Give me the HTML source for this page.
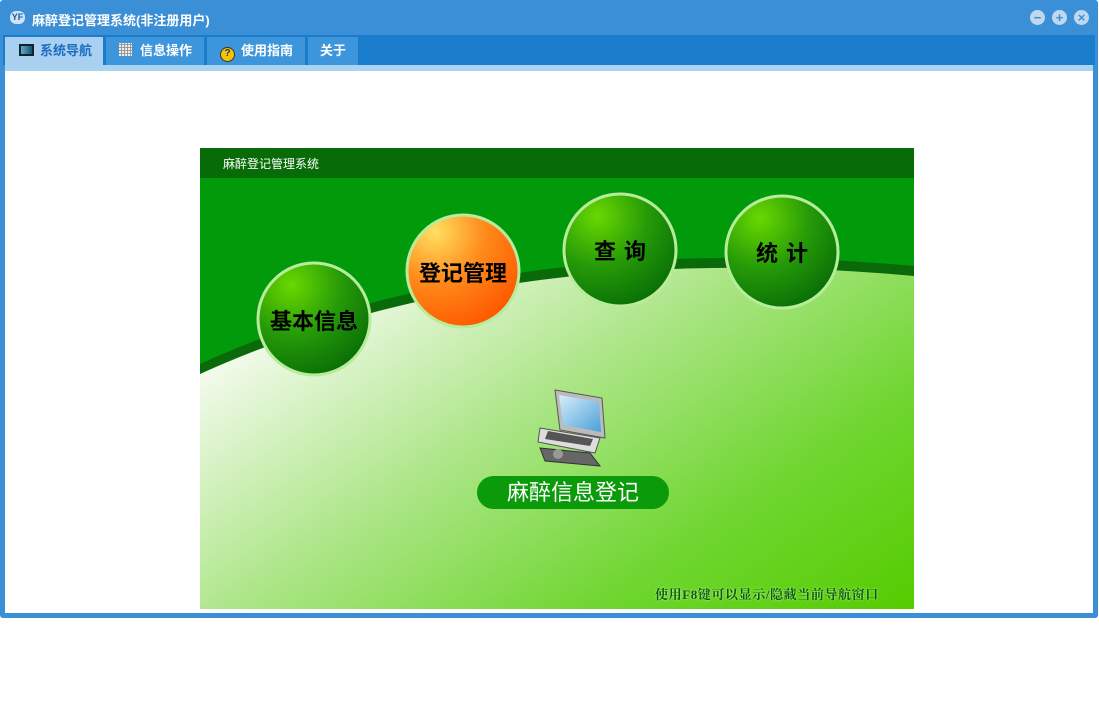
<!DOCTYPE html>
<html><head><meta charset="utf-8"><style>
*{margin:0;padding:0;box-sizing:border-box}
body{width:1099px;height:723px;background:#fff;position:relative;overflow:hidden;font-family:"Liberation Sans","Noto Sans CJK SC",sans-serif}
.win{position:absolute;left:0;top:0;width:1098px;height:618px;background:#3a8fd6;border-radius:3px}
.title{position:absolute;left:32px;top:10px;color:#fff;font-size:13px;font-weight:bold}
.tabbar{position:absolute;left:3px;top:35px;width:1092px;height:30px;background:#1a7dcc}
.tab{position:absolute;top:2px;height:28px;background:#3d95dc;color:#fff;font-size:13px;font-weight:bold;line-height:28px;white-space:nowrap}
.strip{position:absolute;left:5px;top:65px;width:1088px;height:6px;background:#a8d4f2}
.content{position:absolute;left:5px;top:71px;width:1088px;height:542px;background:#fff}
.panel{position:absolute;left:200px;top:148px;width:714px;height:461px;overflow:hidden}
.btn{position:absolute;left:477px;top:476px;width:192px;height:33px;border-radius:17px;background:#0a9a0a;color:#fff;font-size:22px;text-align:center;line-height:33px}
.hint{position:absolute;left:655px;top:584px;font-size:13px;font-weight:bold;color:#0c5a0c;text-shadow:0 0 2px #d0ffb0;letter-spacing:0.6px;font-family:"Liberation Serif","Noto Serif CJK SC",serif}
.ctl{position:absolute;top:10px;width:15px;height:15px;border-radius:50%;background:#c0d8ef;color:#3a8fd6;font-size:13px;font-weight:bold;line-height:15px;text-align:center}
.ct{position:absolute;width:112px;text-align:center;font-size:22px;color:#000;font-weight:bold}
</style></head><body>
<div class="win">
<div style="position:absolute;left:10px;top:11px;width:15px;height:13px;border-radius:6px;background:#cfe3f5;color:#1a5fa5;font-size:9px;font-weight:bold;line-height:13px;text-align:center">YF</div>
<div class="title">麻醉登记管理系统(非注册用户)</div>
<div class="ctl" style="left:1030px">−</div><div class="ctl" style="left:1052px">+</div><div class="ctl" style="left:1074px">×</div>
<div class="tabbar">
<div class="tab" style="left:2px;width:98px;background:#a9d0f0;color:#1a6cc0"><span style="display:inline-block;width:15px;height:12px;border:2px solid #123;background:linear-gradient(90deg,#6ab,#157);margin:0 6px 0 14px;vertical-align:-1px"></span>系统导航</div>
<div class="tab" style="left:103px;width:98px"><span style="display:inline-block;width:13px;height:13px;background:repeating-linear-gradient(90deg,transparent 0 2px,#999 2px 3px),repeating-linear-gradient(0deg,#eee 0 2px,#999 2px 3px);margin:0 8px 0 13px;vertical-align:-1px"></span>信息操作</div>
<div class="tab" style="left:204px;width:98px"><span style="display:inline-block;width:15px;height:15px;border-radius:50%;background:#f5c400;border:1.5px solid #333;color:#236;font-size:10px;line-height:12px;text-align:center;margin:0 6px 0 13px;vertical-align:-1px">?</span>使用指南</div>
<div class="tab" style="left:305px;width:50px;text-align:center">关于</div>
</div>
<div class="strip"></div>
<div class="content"></div>
</div>
<div class="panel">
<svg width="714" height="461" style="position:absolute;left:0;top:0">
<defs>
<linearGradient id="bg" x1="0" y1="0.3" x2="1" y2="1"><stop offset="0" stop-color="#f4fbee"/><stop offset="0.35" stop-color="#aee68a"/><stop offset="0.7" stop-color="#6fd630"/><stop offset="1" stop-color="#55cc00"/></linearGradient>
<radialGradient id="g" cx="0.3" cy="0.2" r="0.9"><stop offset="0" stop-color="#6ad800"/><stop offset="0.5" stop-color="#259a08"/><stop offset="1" stop-color="#066a06"/></radialGradient>
<radialGradient id="o" cx="0.25" cy="0.15" r="0.9"><stop offset="0" stop-color="#ffe060"/><stop offset="0.5" stop-color="#ff8a1a"/><stop offset="1" stop-color="#ff5a00"/></radialGradient>
<linearGradient id="sc" x1="0" y1="0" x2="1" y2="1"><stop offset="0" stop-color="#d8eefa"/><stop offset="1" stop-color="#4a9fd8"/></linearGradient>
</defs>
<rect width="714" height="461" fill="#009a0a"/>
<rect width="714" height="30" fill="#076b07"/>
<path d="M0 216 Q300 80 714 118 L714 461 L0 461Z" fill="#0a6a0a"/>
<path d="M0 226 Q300 90 714 128 L714 461 L0 461Z" fill="url(#bg)"/>
<g stroke="#b7ec9a" stroke-width="3">
<circle cx="114" cy="171" r="56" fill="url(#g)"/>
<circle cx="263" cy="123" r="56" fill="url(#o)"/>
<circle cx="420" cy="102" r="56" fill="url(#g)"/>
<circle cx="582" cy="104" r="56" fill="url(#g)"/>
</g>
<g>
<path d="M340 300 L390 305 L400 318 L345 313Z" fill="#666" stroke="#333"/>
<circle cx="358" cy="306" r="5" fill="#999"/>
<path d="M355 242 L402 250 L405 290 L360 282Z" fill="#bbb" stroke="#555"/>
<path d="M359 247 L399 254 L401 284 L363 277Z" fill="url(#sc)"/>
<path d="M340 280 L400 290 L395 305 L338 294Z" fill="#ddd" stroke="#555"/>
<path d="M348 283 L393 291 L390 298 L345 291Z" fill="#555"/>
</g>
</svg>
<div style="position:absolute;left:23px;top:7px;color:#fff;font-size:12px">麻醉登记管理系统</div>
<div class="ct" style="left:58px;top:156px">基本信息</div>
<div class="ct" style="left:207px;top:108px">登记管理</div>
<div class="ct" style="left:364px;top:86px;letter-spacing:8px;text-indent:8px">查询</div>
<div class="ct" style="left:526px;top:88px;letter-spacing:8px;text-indent:8px">统计</div>
</div>
<div class="btn">麻醉信息登记</div>
<div class="hint">使用F8键可以显示/隐藏当前导航窗口</div>
</body></html>
